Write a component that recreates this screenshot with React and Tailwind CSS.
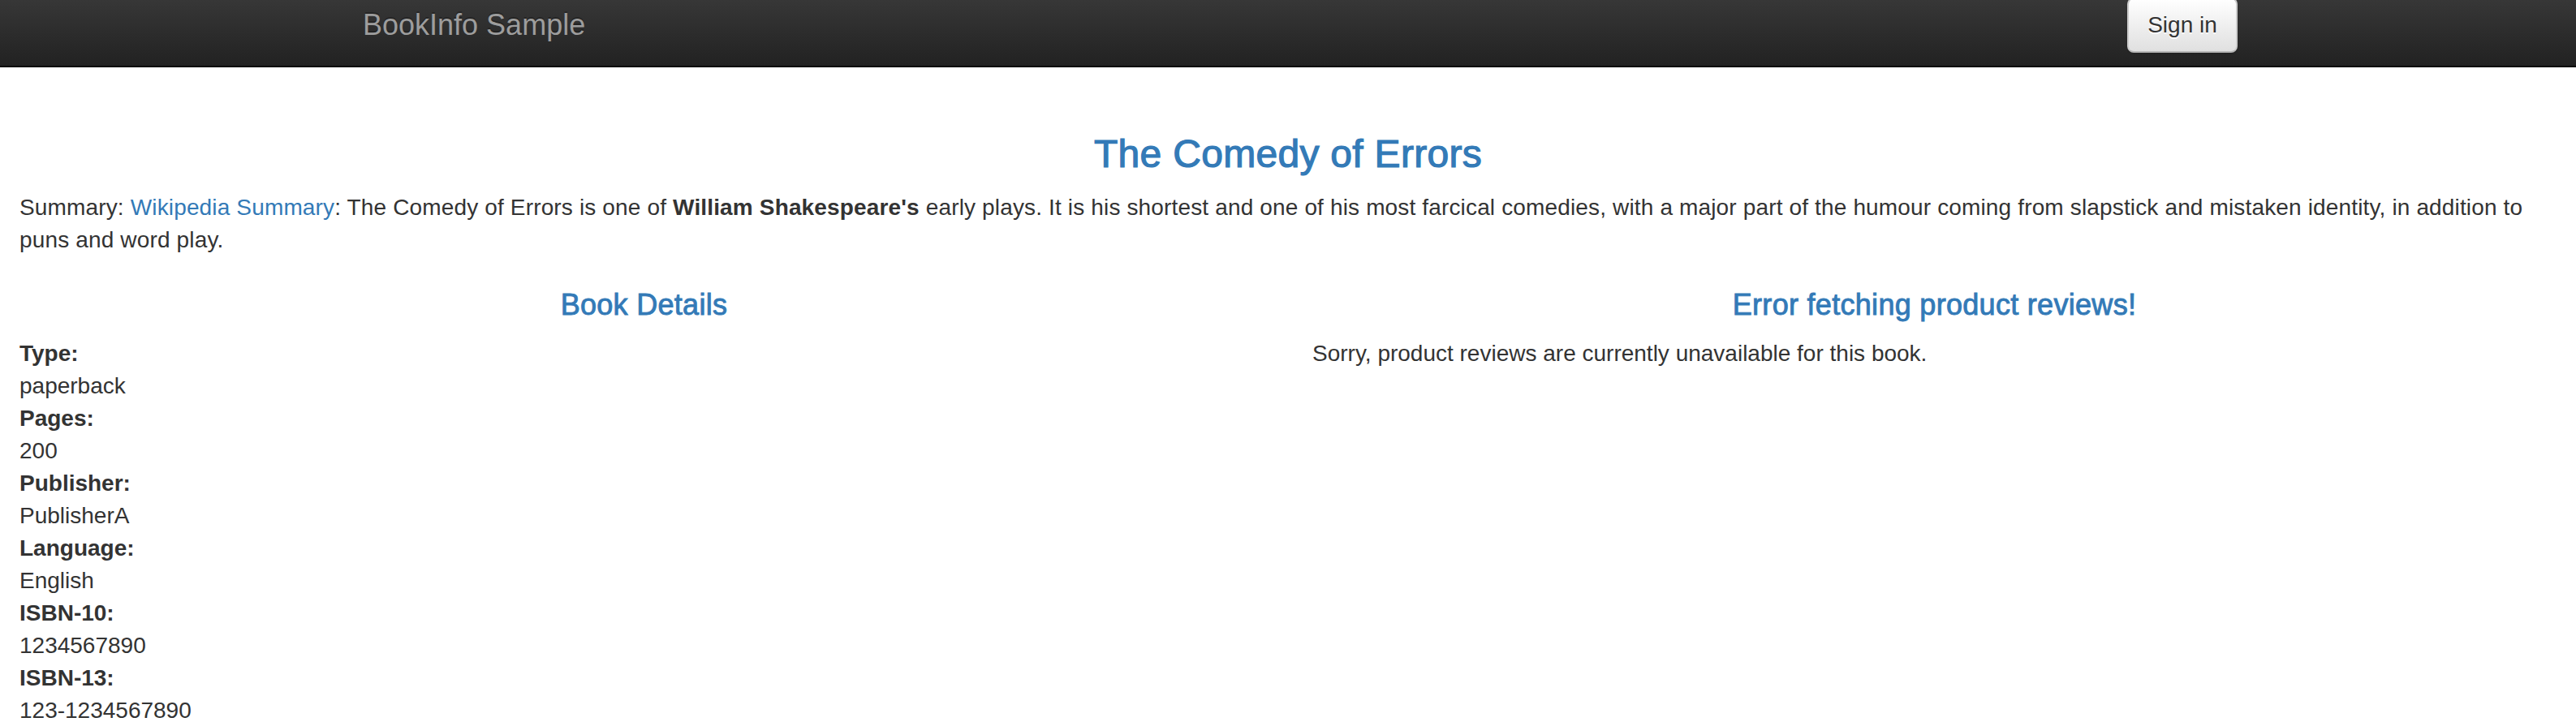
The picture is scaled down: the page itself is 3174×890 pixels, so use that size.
const FONT = "font-['Liberation_Sans','Helvetica_Neue',Arial,sans-serif]";

const details = [
  ['Type:', 'paperback'],
  ['Pages:', '200'],
  ['Publisher:', 'PublisherA'],
  ['Language:', 'English'],
  ['ISBN-10:', '1234567890'],
  ['ISBN-13:', '123-1234567890'],
];

function Navbar() {
  return (
    <nav className="h-[83px] overflow-hidden border-b-2 border-[#080808] bg-linear-to-b from-[#373737] to-[#222]">
      <div className="mx-auto flex w-[2340px] items-start justify-between px-[30px]">
        <a className="pt-[11px] text-[36px] leading-[40px] text-[#9d9d9d] [text-shadow:0_-2px_0_rgba(0,0,0,0.25)]">
          BookInfo Sample
        </a>
        <button
          type="button"
          className="-mr-[30px] -mt-[3px] h-[68px] w-[136px] rounded-[8px] border-2 border-[#ccc] border-b-[#b8b8b8] bg-linear-to-b from-white to-[#e0e0e0] text-[28px] leading-[40px] text-[#333] shadow-[0_2px_2px_rgba(0,0,0,0.075)] [text-shadow:0_2px_0_#fff]"
        >
          Sign in
        </button>
      </div>
    </nav>
  );
}

export default function App() {
  return (
    <div className={`${FONT} min-h-screen bg-white text-[28px] leading-[40px] text-[#333]`}>
      <Navbar />
      <main className="px-[24px] pt-[80px]">
        <h3 className="text-center text-[48px] leading-[53px] tracking-[0.3px] text-[#337ab7] [-webkit-text-stroke:1.2px_#337ab7]">
          The Comedy of Errors
        </h3>
        <p className="mt-[20px] tracking-[0.15px]">
          Summary: <a className="text-[#337ab7]">Wikipedia Summary</a>: The Comedy of Errors is one of{' '}
          <b className="font-bold">William Shakespeare's</b> early plays. It is his shortest and one of his most
          farcical comedies, with a major part of the humour coming from slapstick and mistaken identity, in
          addition to puns and word play.
        </p>
      </main>
      <div className="mt-[20px] grid grid-cols-2">
        <section className="px-[24px]">
          <h4 className="mt-[20px] text-center text-[36px] leading-[40px] tracking-[0.3px] text-[#337ab7] [-webkit-text-stroke:0.9px_#337ab7]">
            Book Details
          </h4>
          <dl className="mt-[20px]">
            {details.map(([label, value]) => (
              <div key={label}>
                <dt className="font-bold">{label}</dt>
                <dd>{value}</dd>
              </div>
            ))}
          </dl>
        </section>
        <section className="pl-[30px] pr-[24px]">
          <h4 className="mt-[20px] text-center text-[36px] leading-[40px] tracking-[0.3px] text-[#337ab7] [-webkit-text-stroke:0.9px_#337ab7]">
            Error fetching product reviews!
          </h4>
          <p className="mt-[20px]">Sorry, product reviews are currently unavailable for this book.</p>
        </section>
      </div>
    </div>
  );
}
